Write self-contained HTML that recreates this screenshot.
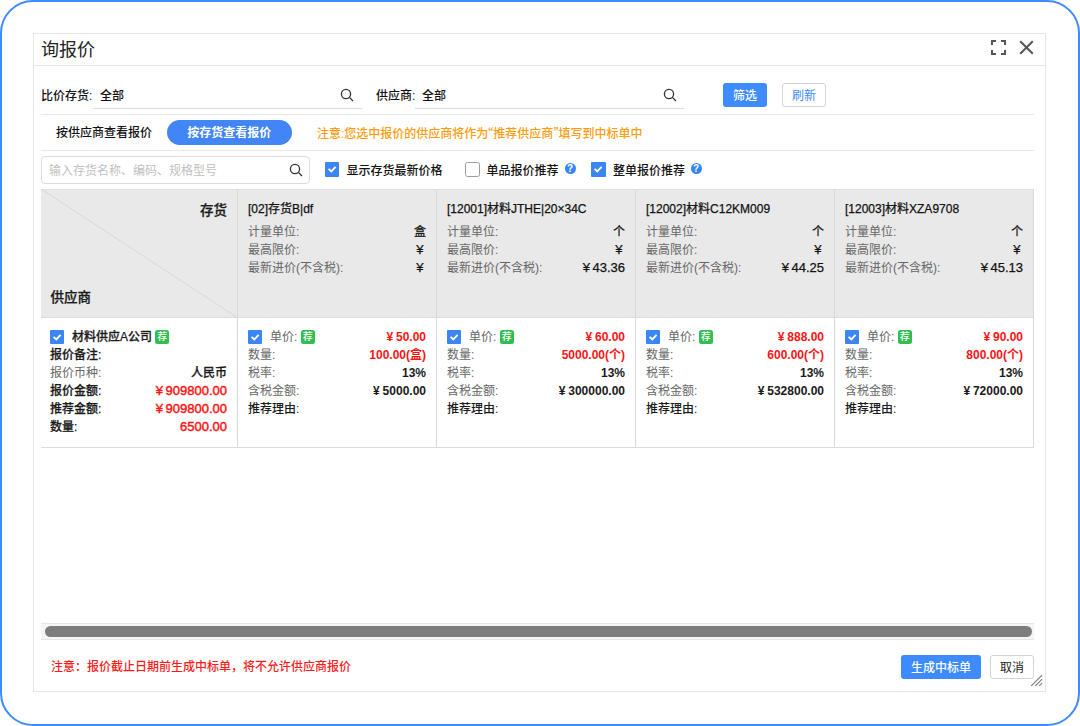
<!DOCTYPE html>
<html lang="zh-CN">
<head>
<meta charset="utf-8">
<title>询报价</title>
<style>
*{box-sizing:border-box;margin:0;padding:0}
html,body{width:1080px;height:726px;overflow:hidden;background:#fff}
body{position:relative;font-family:"Liberation Sans","Noto Sans CJK SC",sans-serif;font-size:12px;color:#222;line-height:18px}
.abs{position:absolute}
.frame{left:0;top:0;width:1080px;height:725.5px;border:2.4px solid #3d8bfd;border-radius:33px}
.dialog{left:33px;top:33px;width:1013px;height:659px;border:1px solid #e6e6e6;background:#fff}
.hline{height:1px;background:#e8e8e8}
.title{left:41px;top:38px;font-size:18px;line-height:24px;color:#222}
.lbl{font-size:12px;font-weight:500;color:#111;white-space:nowrap;line-height:18px}
.btn{height:24px;border-radius:3px;font-size:12px;line-height:24px;text-align:center;white-space:nowrap}
.btn.pri{background:#3d8bfd;color:#fff;font-weight:500;padding-top:1px}
.btn.sec{background:#fff;border:1px solid #d4d4d4;color:#3d8bfd;line-height:22px;padding-top:1px}
.cb{width:14px;height:14px;border-radius:1px}
.cb.big{width:14.5px;height:14.5px}
.cb.on{background:#3b85f5}
.cb.off{background:#fff;border:1.4px solid #9c9c9c;border-radius:2.5px}
.q{font-family:"Noto Sans CJK SC",sans-serif}
.help{width:11px;height:11px;border-radius:50%;background:#3685f7;color:#fff;font-size:10px;font-weight:700;line-height:11px;text-align:center}
table{border-collapse:collapse}
.th{background:#e9e9e9}
.cell{position:absolute;border-right:1px solid #d9d9d9}
.row{display:flex;justify-content:space-between;white-space:nowrap;height:18px;line-height:18px}
.g{color:#666}
.b{font-weight:500;color:#1a1a1a;-webkit-text-stroke:0.25px currentColor}
.b2{font-weight:500;color:#1a1a1a}
.m{font-weight:400;color:#111;-webkit-text-stroke:0.25px currentColor}
.m.n{-webkit-text-stroke:0.25px currentColor}
.r{color:#ff1414;font-weight:400;-webkit-text-stroke:0.45px currentColor}
.n{font-size:13px;word-spacing:-1px}
.b.n{font-weight:400;-webkit-text-stroke:0.45px currentColor}
.k{font-size:12px;word-spacing:-0.5px}
.b.k,.r.k{font-weight:700;-webkit-text-stroke:0}
.tag{display:inline-block;width:14px;height:13.5px;background:#2fbe4f;color:#fff;font-size:10px;line-height:13.5px;text-align:center;border-radius:2.5px;vertical-align:1px;font-weight:500}
</style>
</head>
<body>
<div class="abs frame"></div>
<div class="abs dialog"></div>

<!-- header -->
<div class="abs title">询报价</div>
<svg class="abs" style="left:991px;top:40px" width="15" height="15" viewBox="0 0 15 15" fill="none" stroke="#555" stroke-width="2"><path d="M1 5V1h4M10 1h4v4M14 10v4h-4M5 14H1v-4"/></svg>
<svg class="abs" style="left:1019px;top:40px" width="15" height="15" viewBox="0 0 15 15" fill="none" stroke="#555" stroke-width="2"><path d="M1.2 1.2l12.6 12.6M13.8 1.2L1.2 13.8"/></svg>
<div class="abs hline" style="left:34px;top:65px;width:1011px"></div>

<!-- filter row -->
<div class="abs lbl" style="left:41px;top:87px">比价存货:</div>
<div class="abs lbl" style="left:100px;top:87px">全部</div>
<div class="abs hline" style="left:93px;top:108px;width:269px;background:#dcdcdc"></div>
<svg class="abs" style="left:340px;top:88px" width="14" height="14" viewBox="0 0 14 14" fill="none" stroke="#333" stroke-width="1.3"><circle cx="6" cy="6" r="4.6"/><path d="M9.4 9.4l3.6 3.6"/></svg>
<div class="abs lbl" style="left:376px;top:87px">供应商:</div>
<div class="abs lbl" style="left:422px;top:87px">全部</div>
<div class="abs hline" style="left:415px;top:108px;width:269px;background:#dcdcdc"></div>
<svg class="abs" style="left:663px;top:88px" width="14" height="14" viewBox="0 0 14 14" fill="none" stroke="#333" stroke-width="1.3"><circle cx="6" cy="6" r="4.6"/><path d="M9.4 9.4l3.6 3.6"/></svg>
<div class="abs btn pri" style="left:723px;top:83px;width:44px">筛选</div>
<div class="abs btn sec" style="left:782px;top:83px;width:44px">刷新</div>
<div class="abs hline" style="left:41px;top:114px;width:993px"></div>

<!-- tabs row -->
<div class="abs lbl" style="left:56px;top:124px;font-size:12px">按供应商查看报价</div>
<div class="abs" style="left:166.5px;top:120px;width:125.5px;height:25px;border-radius:13px;background:#4285f4;color:#fff;font-size:12px;font-weight:700;line-height:27px;text-align:center">按存货查看报价</div>
<div class="abs" style="left:317px;top:124px;font-size:12px;color:#ff9c0c;white-space:nowrap;line-height:18px;font-weight:500">注意:您选中报价的供应商将作为<span class="q" style="margin-left:-7px">“</span>推荐供应商<span class="q" style="margin-right:-7px">”</span>填写到中标单中</div>
<div class="abs hline" style="left:41px;top:150px;width:993px"></div>

<!-- search row -->
<div class="abs" style="left:41px;top:156px;width:269px;height:28px;border:1px solid #dcdcdc;border-radius:4px"></div>
<div class="abs" style="left:49px;top:162px;font-size:12px;color:#c0c0c0;white-space:nowrap;line-height:18px">输入存货名称、编码、规格型号</div>
<svg class="abs" style="left:289px;top:163px" width="14" height="14" viewBox="0 0 14 14" fill="none" stroke="#333" stroke-width="1.3"><circle cx="6" cy="6" r="4.6"/><path d="M9.4 9.4l3.6 3.6"/></svg>

<div class="abs cb on big" style="left:324.5px;top:162px"><svg width="14" height="14" viewBox="0 0 14 14" fill="none" stroke="#fff" stroke-width="1.9"><path d="M3.6 6.9l2.7 2.6 4.3-4.7"/></svg></div>
<div class="abs lbl" style="left:346.5px;top:162px;font-size:12px">显示存货最新价格</div>
<div class="abs cb off big" style="left:465px;top:162px"></div>
<div class="abs lbl" style="left:486.5px;top:162px;font-size:12px">单品报价推荐</div>
<div class="abs help" style="left:564.5px;top:163px">?</div>
<div class="abs cb on big" style="left:591px;top:162px"><svg width="14" height="14" viewBox="0 0 14 14" fill="none" stroke="#fff" stroke-width="1.9"><path d="M3.6 6.9l2.7 2.6 4.3-4.7"/></svg></div>
<div class="abs lbl" style="left:613px;top:162px;font-size:12px">整单报价推荐</div>
<div class="abs help" style="left:690.5px;top:163px">?</div>

<!-- table header -->
<div class="abs th" style="left:41px;top:189px;width:993px;height:129px;border-top:1px solid #e0e0e0;border-bottom:1px solid #dcdcdc"></div>
<svg class="abs" style="left:41px;top:189px" width="197" height="129"><line x1="0" y1="0" x2="197" y2="129" stroke="#d6d6d6" stroke-width="1"/></svg>
<div class="abs b" style="left:200px;top:201.5px;font-size:13.5px">存货</div>
<div class="abs b" style="left:50.5px;top:288.5px;font-size:13.5px">供应商</div>

<!-- column separators -->
<div class="abs" style="left:237px;top:189px;width:1px;height:259px;background:#d9d9d9"></div>
<div class="abs" style="left:436px;top:189px;width:1px;height:259px;background:#d9d9d9"></div>
<div class="abs" style="left:635px;top:189px;width:1px;height:259px;background:#d9d9d9"></div>
<div class="abs" style="left:834px;top:189px;width:1px;height:259px;background:#d9d9d9"></div>
<div class="abs" style="left:1033px;top:189px;width:1px;height:259px;background:#d9d9d9"></div>
<div class="abs hline" style="left:41px;top:447px;width:993px;background:#dcdcdc"></div>

<!-- header cells -->
<div class="abs" style="left:248px;top:200px;width:178px">
  <div class="row m" style="font-size:12px">[02]存货B|df</div>
  <div class="row" style="margin-top:5px"><span class="g">计量单位:</span><span class="m">盒</span></div>
  <div class="row"><span class="g">最高限价:</span><span class="m n">¥&nbsp;</span></div>
  <div class="row"><span class="g">最新进价(不含税):</span><span class="m n">¥&nbsp;</span></div>
</div>
<div class="abs" style="left:447px;top:200px;width:178px">
  <div class="row m" style="font-size:12px">[12001]材料JTHE|20×34C</div>
  <div class="row" style="margin-top:5px"><span class="g">计量单位:</span><span class="m">个</span></div>
  <div class="row"><span class="g">最高限价:</span><span class="m n">¥&nbsp;</span></div>
  <div class="row"><span class="g">最新进价(不含税):</span><span class="m n">¥ 43.36</span></div>
</div>
<div class="abs" style="left:646px;top:200px;width:178px">
  <div class="row m" style="font-size:12px">[12002]材料C12KM009</div>
  <div class="row" style="margin-top:5px"><span class="g">计量单位:</span><span class="m">个</span></div>
  <div class="row"><span class="g">最高限价:</span><span class="m n">¥&nbsp;</span></div>
  <div class="row"><span class="g">最新进价(不含税):</span><span class="m n">¥ 44.25</span></div>
</div>
<div class="abs" style="left:845px;top:200px;width:178px">
  <div class="row m" style="font-size:12px">[12003]材料XZA9708</div>
  <div class="row" style="margin-top:5px"><span class="g">计量单位:</span><span class="m">个</span></div>
  <div class="row"><span class="g">最高限价:</span><span class="m n">¥&nbsp;</span></div>
  <div class="row"><span class="g">最新进价(不含税):</span><span class="m n">¥ 45.13</span></div>
</div>

<!-- data row: supplier -->
<div class="abs" style="left:50px;top:328px;width:177px">
  <div class="row"><span><span class="cb on" style="display:inline-block;vertical-align:-3px;margin-right:8px"><svg width="14" height="14" viewBox="0 0 14 14" fill="none" stroke="#fff" stroke-width="1.9"><path d="M3.6 6.9l2.7 2.6 4.3-4.7"/></svg></span><span class="b">材料供应A公司</span> <span class="tag">荐</span></span></div>
  <div class="row"><span class="b">报价备注:</span></div>
  <div class="row"><span class="g">报价币种:</span><span class="b">人民币</span></div>
  <div class="row"><span class="b">报价金额:</span><span class="r n">¥ 909800.00</span></div>
  <div class="row"><span class="b">推荐金额:</span><span class="r n">¥ 909800.00</span></div>
  <div class="row"><span class="b">数量:</span><span class="r n">6500.00</span></div>
</div>

<div class="abs" style="left:248px;top:328px;width:178px">
  <div class="row"><span><span class="cb on" style="display:inline-block;vertical-align:-3px;margin-right:8px"><svg width="14" height="14" viewBox="0 0 14 14" fill="none" stroke="#fff" stroke-width="1.9"><path d="M3.6 6.9l2.7 2.6 4.3-4.7"/></svg></span><span class="g">单价:</span> <span class="tag">荐</span></span><span class="r k">¥ 50.00</span></div>
  <div class="row"><span class="g">数量:</span><span class="r k">100.00(盒)</span></div>
  <div class="row"><span class="g">税率:</span><span class="b k">13%</span></div>
  <div class="row"><span class="g">含税金额:</span><span class="b k">¥ 5000.00</span></div>
  <div class="row"><span class="b2">推荐理由:</span></div>
</div>
<div class="abs" style="left:447px;top:328px;width:178px">
  <div class="row"><span><span class="cb on" style="display:inline-block;vertical-align:-3px;margin-right:8px"><svg width="14" height="14" viewBox="0 0 14 14" fill="none" stroke="#fff" stroke-width="1.9"><path d="M3.6 6.9l2.7 2.6 4.3-4.7"/></svg></span><span class="g">单价:</span> <span class="tag">荐</span></span><span class="r k">¥ 60.00</span></div>
  <div class="row"><span class="g">数量:</span><span class="r k">5000.00(个)</span></div>
  <div class="row"><span class="g">税率:</span><span class="b k">13%</span></div>
  <div class="row"><span class="g">含税金额:</span><span class="b k">¥ 300000.00</span></div>
  <div class="row"><span class="b2">推荐理由:</span></div>
</div>
<div class="abs" style="left:646px;top:328px;width:178px">
  <div class="row"><span><span class="cb on" style="display:inline-block;vertical-align:-3px;margin-right:8px"><svg width="14" height="14" viewBox="0 0 14 14" fill="none" stroke="#fff" stroke-width="1.9"><path d="M3.6 6.9l2.7 2.6 4.3-4.7"/></svg></span><span class="g">单价:</span> <span class="tag">荐</span></span><span class="r k">¥ 888.00</span></div>
  <div class="row"><span class="g">数量:</span><span class="r k">600.00(个)</span></div>
  <div class="row"><span class="g">税率:</span><span class="b k">13%</span></div>
  <div class="row"><span class="g">含税金额:</span><span class="b k">¥ 532800.00</span></div>
  <div class="row"><span class="b2">推荐理由:</span></div>
</div>
<div class="abs" style="left:845px;top:328px;width:178px">
  <div class="row"><span><span class="cb on" style="display:inline-block;vertical-align:-3px;margin-right:8px"><svg width="14" height="14" viewBox="0 0 14 14" fill="none" stroke="#fff" stroke-width="1.9"><path d="M3.6 6.9l2.7 2.6 4.3-4.7"/></svg></span><span class="g">单价:</span> <span class="tag">荐</span></span><span class="r k">¥ 90.00</span></div>
  <div class="row"><span class="g">数量:</span><span class="r k">800.00(个)</span></div>
  <div class="row"><span class="g">税率:</span><span class="b k">13%</span></div>
  <div class="row"><span class="g">含税金额:</span><span class="b k">¥ 72000.00</span></div>
  <div class="row"><span class="b2">推荐理由:</span></div>
</div>

<!-- scrollbar -->
<div class="abs" style="left:41px;top:623px;width:993px;height:17px;background:#f5f5f5;border-top:1px solid #e6e6e6;border-bottom:1px solid #e6e6e6"></div>
<div class="abs" style="left:45px;top:626px;width:987px;height:11px;border-radius:6px;background:#7d7d7d"></div>

<!-- footer -->
<div class="abs" style="left:51px;top:658px;font-size:12px;color:#ff1a1a;white-space:nowrap;line-height:18px;font-weight:500">注意：报价截止日期前生成中标单，将不允许供应商报价</div>
<div class="abs btn pri" style="left:901px;top:655px;width:80px">生成中标单</div>
<div class="abs btn sec" style="left:990px;top:655px;width:44px;color:#222">取消</div>
<svg class="abs" style="left:1030px;top:674px" width="14" height="14" viewBox="0 0 14 14" stroke="#777" stroke-width="1.1" fill="none"><path d="M1.2 11.8L12.1 1.1M5.3 11.8l6.8-6.6M9.2 11.8l2.9-2.6"/></svg>
</body>
</html>
